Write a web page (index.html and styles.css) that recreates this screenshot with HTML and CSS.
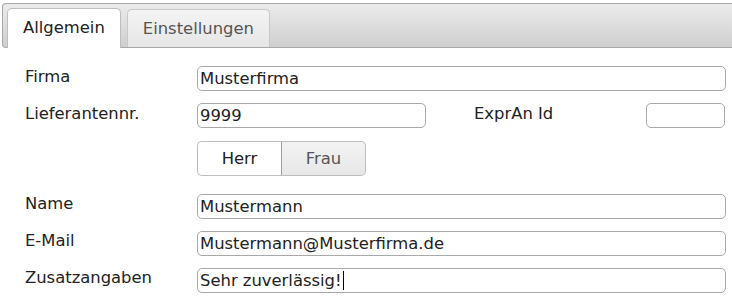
FILE: index.html
```html
<!DOCTYPE html>
<html lang="de">
<head>
<meta charset="utf-8">
<title>Lieferant</title>
<link rel="stylesheet" href="styles.css">
</head>
<body>
<div class="tabbar">
  <div class="tab active">Allgemein</div>
  <div class="tab">Einstellungen</div>
</div>
<div class="form">
  <div class="label">Firma</div>
  <div class="field">Musterfirma</div>

  <div class="label">Lieferantennr.</div>
  <div class="row">
    <div class="field short">9999</div>
    <div class="label sub">ExprAn Id</div>
    <div class="field tiny"></div>
  </div>

  <div class="label"></div>
  <div class="toggle">
    <div class="tbtn on">Herr</div>
    <div class="tbtn off">Frau</div>
  </div>

  <div class="label">Name</div>
  <div class="field">Mustermann</div>

  <div class="label">E-Mail</div>
  <div class="field">Mustermann@Musterfirma.de</div>

  <div class="label">Zusatzangaben</div>
  <div class="field">Sehr zuverlässig!<span class="caret"></span></div>
</div>
</body>
</html>
```
FILE: styles.css
```css
html, body {
  margin: 0;
  padding: 0;
  background: #fff;
}
body {
  font-family: "DejaVu Sans", Verdana, sans-serif;
  font-size: 16.4px;
  color: #222;
  width: 732px;
  height: 302px;
  overflow: hidden;
}
.tabbar {
  margin: 3px 0 0 2px;
  height: 38px;
  padding: 5px 0 0 4px;
  border: 1px solid #a8a8a8;
  border-right: none;
  border-radius: 4px 0 0 4px;
  background: linear-gradient(#ebebeb, #cfcfcf);
  display: flex;
  align-items: flex-end;
  gap: 6px;
}
.tab {
  height: 38px;
  box-sizing: border-box;
  border: 1px solid #c8c8c8;
  border-bottom: none;
  border-radius: 5px 5px 0 0;
  background: linear-gradient(#f4f4f4, #e6e6e6);
  color: #555;
  padding: 0 15px;
  line-height: 38px;
}
.tab.active {
  background: #fff;
  color: #222;
  height: 40px;
  margin-bottom: -1px;
  padding: 0 15px;
  border-color: #bdbdbd;
}
.form {
  display: grid;
  grid-template-columns: 172px 529px;
  grid-auto-rows: auto;
  row-gap: 12.2px;
  padding: 18px 0 0 25px;
  align-items: center;
}
.label {
  line-height: 20px;
  margin-top: -4px;
}
.field {
  box-sizing: border-box;
  height: 25px;
  border: 1px solid #a9a9a9;
  border-radius: 5px;
  padding: 0 2px;
  line-height: 23px;
  white-space: nowrap;
  overflow: hidden;
  background: #fff;
}
.row {
  display: flex;
  align-items: center;
}
.field.short { width: 229px; }
.label.sub { margin-left: 48px; width: 172px; }
.field.tiny { width: 79px; margin-left: 0; }
.toggle {
  display: flex;
  margin-top: 1px;
  margin-bottom: 5px;
}
.tbtn {
  box-sizing: border-box;
  height: 35px;
  line-height: 33px;
  text-align: center;
  border: 1px solid #bdbdbd;
}
.tbtn.on {
  width: 85px;
  background: #fff;
  color: #222;
  border-radius: 5px 0 0 5px;
  border-right-color: #a0a0a0;
}
.tbtn.off {
  width: 84px;
  background: linear-gradient(#f3f3f3, #e7e7e7);
  color: #555;
  border-left: none;
  border-radius: 0 5px 5px 0;
}
.caret {
  display: inline-block;
  width: 1px;
  height: 19px;
  background: #000;
  vertical-align: -4px;
  margin-left: 1px;
}
```
